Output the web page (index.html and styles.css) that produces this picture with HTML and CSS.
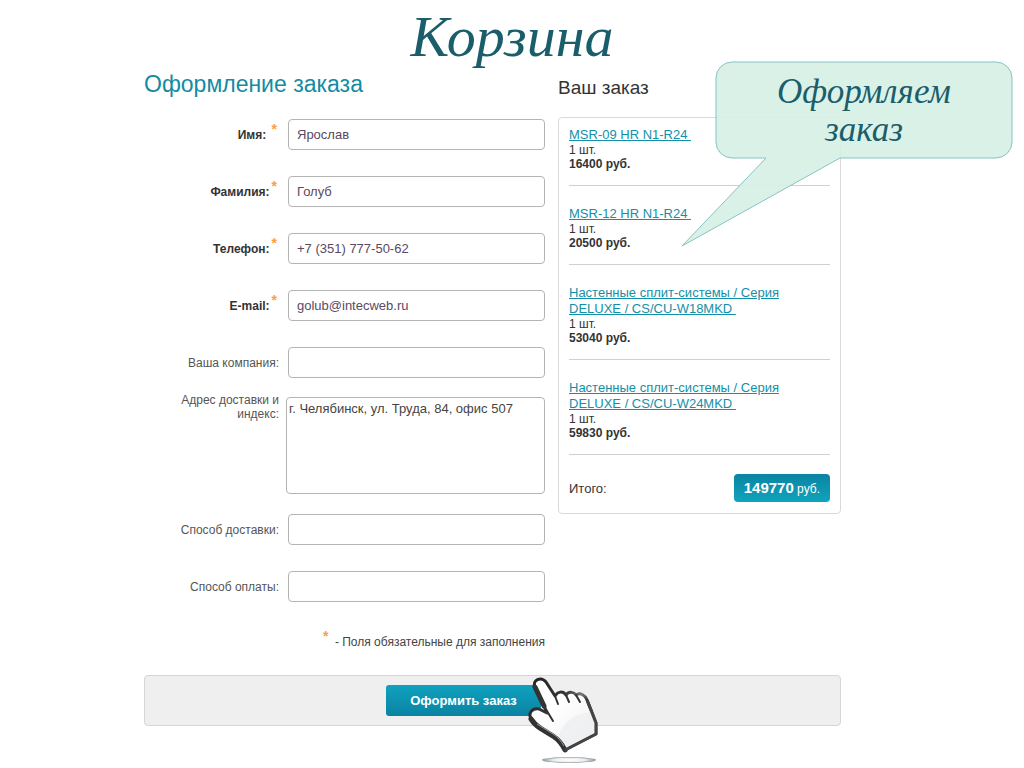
FILE: index.html
```
<!DOCTYPE html>
<html lang="ru">
<head>
    <meta charset="UTF-8">
    <meta name="viewport" content="width=device-width, initial-scale=1.0">
    <title>Корзина</title>
    <link rel="stylesheet" href="styles.css">
</head>
<body>
    <h1 class="page-title">Корзина</h1>

    <main class="checkout">
        <div class="columns">
            <!-- Customer form -->
            <form class="order-form" id="orderForm">
                <h2>Оформление заказа</h2>
                <div class="row">
                    <label class="required" for="firstName">Имя: <sup>*</sup></label>
                    <input type="text" id="firstName" value="Ярослав">
                </div>
                <div class="row">
                    <label class="required" for="lastName">Фамилия:<sup>*</sup></label>
                    <input type="text" id="lastName" value="Голуб">
                </div>
                <div class="row">
                    <label class="required" for="phone">Телефон:<sup>*</sup></label>
                    <input type="tel" id="phone" value="+7 (351) 777-50-62">
                </div>
                <div class="row">
                    <label class="required" for="email">E-mail:<sup>*</sup></label>
                    <input type="email" id="email" value="golub@intecweb.ru">
                </div>
                <div class="row">
                    <label for="company">Ваша компания:</label>
                    <input type="text" id="company">
                </div>
                <div class="row row-address">
                    <label for="address">Адрес доставки и индекс:</label>
                    <textarea id="address">г. Челябинск, ул. Труда, 84, офис 507</textarea>
                </div>
                <div class="row">
                    <label for="delivery">Способ доставки:</label>
                    <input type="text" id="delivery">
                </div>
                <div class="row">
                    <label for="payment">Способ оплаты:</label>
                    <input type="text" id="payment">
                </div>
                <p class="note"><sup>*</sup> - Поля обязательные для заполнения</p>
            </form>

            <!-- Order summary -->
            <aside class="order">
                <h3>Ваш заказ</h3>
                <div class="order-box">
                    <ul>
                        <li>
                            <a href="#">MSR-09 HR N1-R24&nbsp;</a>
                            <p>1 шт.</p>
                            <p class="price">16400 руб.</p>
                        </li>
                        <li>
                            <a href="#">MSR-12 HR N1-R24&nbsp;</a>
                            <p>1 шт.</p>
                            <p class="price">20500 руб.</p>
                        </li>
                        <li>
                            <a href="#">Настенные сплит-системы / Серия DELUXE / CS/CU-W18MKD&nbsp;</a>
                            <p>1 шт.</p>
                            <p class="price">53040 руб.</p>
                        </li>
                        <li>
                            <a href="#">Настенные сплит-системы / Серия DELUXE / CS/CU-W24MKD&nbsp;</a>
                            <p>1 шт.</p>
                            <p class="price">59830 руб.</p>
                        </li>
                    </ul>
                    <div class="total">
                        <span>Итого:</span>
                        <span class="total-sum"><b>149770</b> руб.</span>
                    </div>
                </div>
            </aside>
        </div>

        <div class="submit-bar">
            <div class="submit-wrap">
                <button type="submit" form="orderForm">Оформить заказ</button>
                <!-- Hand pointer -->
                <svg class="hand" width="80" height="92" viewBox="0 0 80 92" aria-hidden="true">
                    <defs>
                        <linearGradient id="handFill" x1="0" y1="0" x2="1" y2="1">
                            <stop offset="0.4" stop-color="#fff"/>
                            <stop offset="1" stop-color="#eee"/>
                        </linearGradient>
                        <linearGradient id="handEdge" x1="0" y1="0" x2="1" y2="1">
                            <stop offset="0" stop-color="#222"/>
                            <stop offset="0.35" stop-color="#333"/>
                            <stop offset="0.5" stop-color="#777"/>
                            <stop offset="0.6" stop-color="#222"/>
                            <stop offset="1" stop-color="#666"/>
                        </linearGradient>
                        <radialGradient id="handShadow">
                            <stop offset="0" stop-color="#fff"/>
                            <stop offset="0.6" stop-color="#eee"/>
                            <stop offset="1" stop-color="#8a9499"/>
                        </radialGradient>
                    </defs>
                    <ellipse cx="44" cy="85" rx="27" ry="3" fill="url(#handShadow)"/>
                    <path d="M19 31 L10 12 C7 5 16 1 21 7 L30 21 C33 16 38 16 41 20 C44 16 49 17 51 20 C55 17 60 20 62 25 L66 35 L71 48 L71 59 L40 75 C37 69 34 65 28 61 L15 53 C10 50 8 47 6 44 C3 38 7 33 14 34 L22 38 Z" fill="url(#handFill)" stroke="url(#handEdge)" stroke-width="3" stroke-linejoin="round"/>
                    <path d="M66 37 C50 38 36 48 33 64 L40 75 L71 59 L71 48 Z" fill="#eceeef" opacity="0.7"/>
                    <path d="M19 31 L10 12 M40 75 C37 69 34 65 28 61 L15 53 C10 50 8 47 6 44" fill="none" stroke="#333" stroke-width="5" stroke-linecap="round"/>
                    <path d="M12 49 L28 59 C33 62 36 66 39 71" fill="none" stroke="#999" stroke-width="1"/>
                    <path d="M19 31 L28 46 M30 21 L33 29 M41 20 L44 27 M51 20 L55 27" fill="none" stroke="#333" stroke-width="2" stroke-linecap="round"/>
                    <path d="M62 25 L66 35 L71 48 L71 59 L40 75" fill="none" stroke="#444" stroke-width="3" stroke-linejoin="round"/>
                </svg>
            </div>
        </div>
    </main>

    <!-- Speech bubble over the order summary -->
    <div class="callout">
        <svg width="332" height="186" viewBox="0 0 332 186" aria-hidden="true">
            <path d="M51 1 H315 A16 16 0 0 1 331 17 V81 A16 16 0 0 1 315 97 H159 L1 185 L85 97 H51 A16 16 0 0 1 35 81 V17 A16 16 0 0 1 51 1 Z" fill="#d7f0e5" fill-opacity="0.92" stroke="#86c3c6"/>
        </svg>
        <p>Оформляем заказ</p>
    </div>
</body>
</html>
```

FILE: styles.css
```
* {
    margin: 0;
    padding: 0;
    box-sizing: border-box;
}
body {
    position: relative;
    min-height: 100vh;
    background: #fff;
    color: #333;
    font-family: "Liberation Sans", Arial, sans-serif;
    font-size: 12px;
}
.page-title {
    height: 70px;
    line-height: 74px;
    text-align: center;
    color: #1b5e6b;
    font-family: "Liberation Serif", Georgia, serif;
    font-size: 58px;
    font-style: italic;
    font-weight: normal;
}
.checkout {
    padding: 0 183px 0 144px;
}
.columns {
    display: flex;
    align-items: flex-start;
    gap: 13px;
}

/* Form */
.order-form {
    flex: 1;
}
.order-form h2 {
    margin-bottom: 21px;
    line-height: 28px;
    color: #148ba3;
    font-size: 23px;
    font-weight: normal;
}
.row {
    display: grid;
    grid-template-columns: 135px 1fr;
    column-gap: 9px;
    align-items: center;
    margin-bottom: 26px;
}
.row label {
    text-align: right;
    line-height: 14px;
    color: #555;
}
.row label.required {
    padding-right: 2px;
    color: #333;
    font-weight: bold;
}
sup {
    margin-left: 2px;
    color: #f9a040;
    font-size: 14px;
    font-weight: bold;
    line-height: 0;
}
.row input, .row textarea {
    width: 100%;
    border: 1px solid #b4b4b4;
    border-radius: 4px;
    background: #fff;
    color: #5a4a60;
    font-family: inherit;
    font-size: 13px;
}
.row input {
    height: 31px;
    padding: 0 8px;
}
.row textarea {
    display: block;
    height: 97px;
    padding: 3px 2px;
    color: #444;
    resize: none;
}
.row-address {
    column-gap: 7px;
    align-items: start;
    margin-top: -7px;
    margin-bottom: 20px;
}
.row-address label {
    padding-left: 32px;
    margin-top: -4px;
}
.note {
    padding-top: 7px;
    text-align: right;
    line-height: 14px;
    color: #444;
}
.note sup {
    margin-right: 3px;
}

/* Order summary */
.order {
    width: 283px;
}
.order h3 {
    padding-top: 6px;
    margin-bottom: 17px;
    line-height: 24px;
    font-size: 19px;
    font-weight: normal;
}
.order-box {
    padding: 9px 10px 11px;
    border: 1px solid #d9d9d9;
    border-radius: 4px;
}
.order-box ul {
    list-style: none;
}
.order-box li {
    padding: 20px 0 14px;
    border-bottom: 1px solid #d0d0d0;
    line-height: 14px;
}
.order-box li:first-child {
    padding-top: 0;
}
.order-box a {
    display: inline-block;
    vertical-align: top;
    color: #1390a8;
    font-size: 13px;
    line-height: 16px;
}
.order-box .price {
    font-weight: bold;
}
.total {
    display: flex;
    justify-content: space-between;
    align-items: center;
    padding-top: 19px;
    font-size: 13px;
}
.total-sum {
    height: 28px;
    padding: 0 10px;
    border-radius: 4px;
    background: linear-gradient(#0a84a3, #11a3bd);
    color: #fff;
    font-size: 12px;
    line-height: 28px;
}
.total-sum b {
    font-size: 15px;
}

/* Submit */
.submit-bar {
    display: flex;
    justify-content: center;
    padding: 9px 67px 9px 9px;
    margin-top: 26px;
    border: 1px solid #d6d6d6;
    border-radius: 4px;
    background: #efefef;
}
.submit-wrap {
    position: relative;
}
.submit-bar button {
    display: block;
    height: 31px;
    padding: 0 24px;
    border: none;
    border-radius: 3px;
    background: linear-gradient(#0fa2bf, #0a83a2);
    color: #fff;
    font-family: inherit;
    font-size: 13px;
    font-weight: bold;
    cursor: pointer;
}
.hand {
    position: absolute;
    top: -10px;
    left: 139px;
    pointer-events: none;
}

/* Speech bubble */
.callout {
    position: absolute;
    top: 61px;
    right: 11px;
    pointer-events: none;
}
.callout svg {
    display: block;
}
.callout p {
    position: absolute;
    top: 12px;
    left: 80px;
    width: 206px;
    text-align: center;
    color: #1b5e6b;
    font-family: "Liberation Serif", Georgia, serif;
    font-size: 35px;
    font-style: italic;
    line-height: 38px;
}
```
